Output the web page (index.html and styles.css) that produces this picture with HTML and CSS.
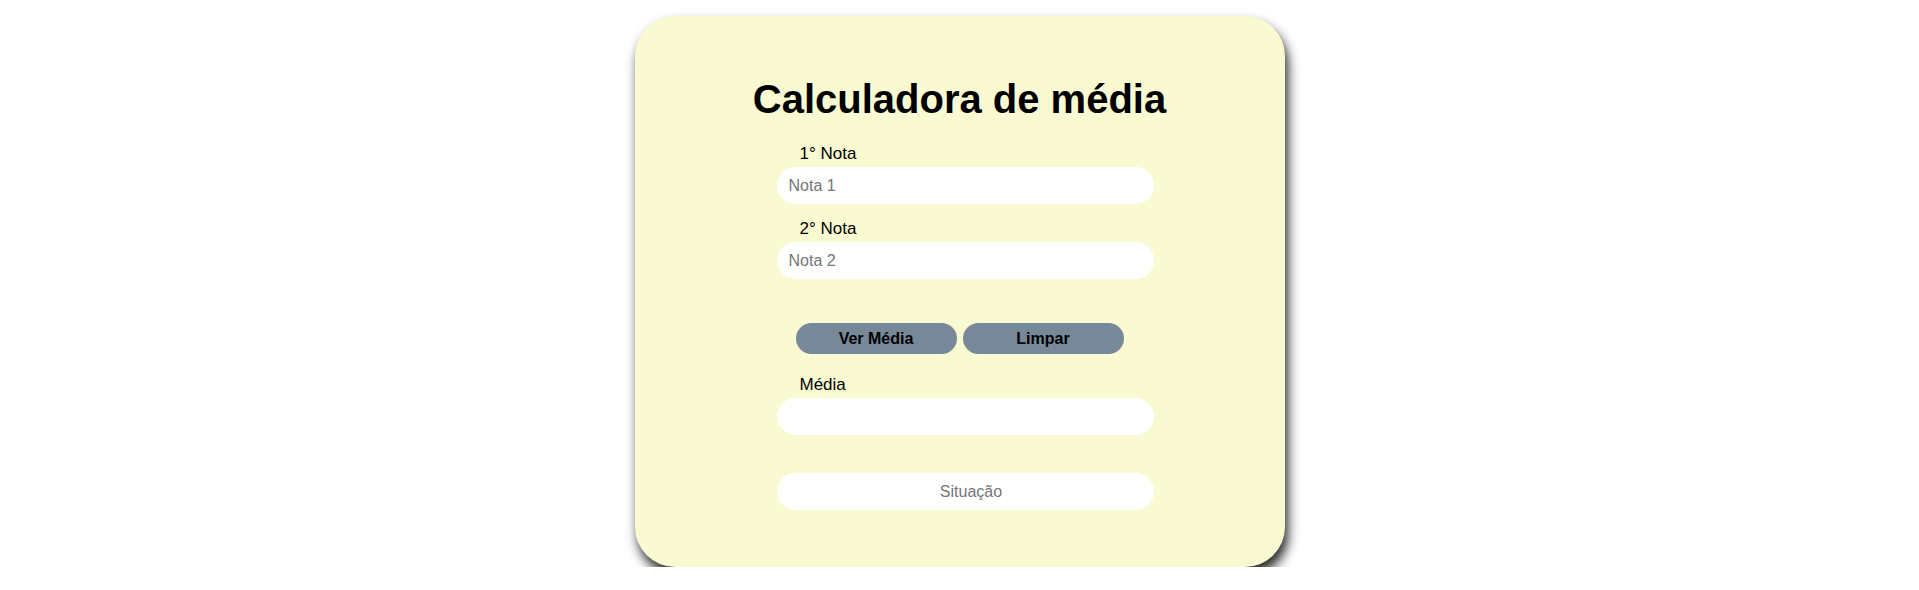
FILE: index.html
```html
<!DOCTYPE html>
<html lang="pt-BR">
<head>
<meta charset="UTF-8">
<title>Calculadora de média</title>
<link rel="stylesheet" href="styles.css">
</head>
<body>
  <main class="card">
    <h1 class="title">Calculadora de média</h1>
    <div class="fields">
      <label class="label" for="n1">1° Nota</label>
      <input class="field" id="n1" type="text" placeholder="Nota 1">
      <label class="label label-next" for="n2">2° Nota</label>
      <input class="field" id="n2" type="text" placeholder="Nota 2">
      <div class="actions">
        <button class="btn" type="button">Ver Média</button>
        <button class="btn" type="button">Limpar</button>
      </div>
      <label class="label label-media" for="media">Média</label>
      <input class="field" id="media" type="text">
      <input class="field field-status" type="text" placeholder="Situação">
    </div>
  </main>
</body>
</html>
```
FILE: styles.css
```css
html, body {
  margin: 0;
  padding: 0;
  background: #ffffff;
}

body {
  font-family: "Liberation Sans", Arial, sans-serif;
  color: #000;
  padding-top: 16px;
}

.card {
  box-sizing: border-box;
  width: 650px;
  height: 551px;
  margin: 0 auto;
  background: #fafad2;
  border-radius: 40px;
  box-shadow: 3px 8px 12px rgba(0, 0, 0, 0.85);
  padding-top: 60px;
}

.title {
  margin: 0;
  font-size: 40px;
  line-height: 46px;
  font-weight: bold;
  text-align: center;
}

.fields {
  width: 377px;
  margin-left: 142px;
  margin-top: 22px;
  display: flex;
  flex-direction: column;
}

.label {
  display: block;
  font-size: 17px;
  line-height: 20px;
  padding-left: 23px;
  margin-bottom: 3px;
}

.label-next {
  margin-top: 15px;
}

.label-media {
  margin-top: 21px;
}

.field {
  box-sizing: border-box;
  width: 377px;
  height: 37px;
  border: none;
  outline: none;
  border-radius: 19px;
  background: #ffffff;
  padding: 0 0 0 12px;
  margin: 0;
  font-family: "Liberation Sans", Arial, sans-serif;
  font-size: 16px;
  color: #000;
}

.field::placeholder {
  color: #757575;
}

.field-status {
  margin-top: 38px;
  text-align: center;
}

.actions {
  display: flex;
  gap: 6px;
  margin-top: 44px;
  margin-left: 19px;
}

.btn {
  box-sizing: border-box;
  width: 161px;
  height: 31px;
  border: none;
  border-radius: 16px;
  background: #778899;
  color: #000;
  font-family: "Liberation Sans", Arial, sans-serif;
  font-size: 16px;
  font-weight: bold;
  padding: 0;
  margin: 0;
}
```
